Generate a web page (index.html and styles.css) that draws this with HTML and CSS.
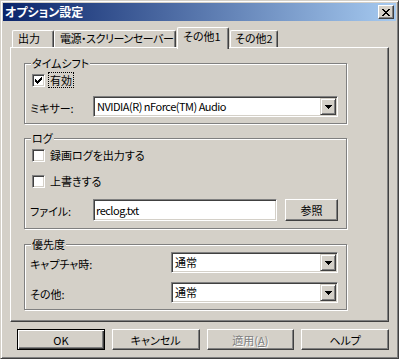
FILE: index.html
```html
<!DOCTYPE html>
<html lang="ja">
<head>
<meta charset="utf-8">
<title>オプション設定</title>
<link rel="stylesheet" href="styles.css">
</head>
<body>
<div class="window">
  <div class="titlebar">
    <span class="title">オプション設定</span>
    <span class="close">
      <svg width="8" height="7" viewBox="0 0 8 7" shape-rendering="crispEdges"><path fill="#000" d="M0 0h2v1h-2zM6 0h2v1h-2zM1 1h2v1h-2zM5 1h2v1h-2zM2 2h4v1h-4zM3 3h2v1h-2zM2 4h4v1h-4zM1 5h2v1h-2zM5 5h2v1h-2zM0 6h2v1h-2zM6 6h2v1h-2z"/></svg>
    </span>
  </div>
  <div class="client">
    <div class="tabs">
      <div class="tab t1">出力</div>
      <div class="tab t2">電源・スクリーンセーバー</div>
      <div class="tab t3 active">その他1</div>
      <div class="tab t4">その他2</div>
    </div>
    <div class="panel">
      <div class="group g1">
        <span class="legend">タイムシフト</span>
        <div class="check-row">
          <span class="checkbox"><svg width="7" height="7" viewBox="0 0 7 7" shape-rendering="crispEdges"><path fill="#000" d="M6 0h1v1h-1zM5 1h2v1h-2zM0 2h1v1h-1zM4 2h3v1h-3zM0 3h2v1h-2zM3 3h3v1h-3zM0 4h5v1h-5zM1 5h3v1h-3zM2 6h1v1h-1z"/></svg></span>
          <span class="check-label focus">有効</span>
        </div>
        <div class="field-row mixer">
          <span class="field-label short">ミキサー:</span>
          <div class="combo combo-wide">
            <span class="combo-text latin">NVIDIA(R) nForce(TM) Audio</span>
            <span class="drop"><svg width="7" height="4" viewBox="0 0 7 4" shape-rendering="crispEdges"><path fill="#000" d="M0 0h7v1h-7zM1 1h5v1h-5zM2 2h3v1h-3zM3 3h1v1h-1z"/></svg></span>
          </div>
        </div>
      </div>

      <div class="group g2">
        <span class="legend">ログ</span>
        <div class="check-row">
          <span class="checkbox"></span>
          <span class="check-label">録画ログを出力する</span>
        </div>
        <div class="check-row gap10">
          <span class="checkbox"></span>
          <span class="check-label">上書きする</span>
        </div>
        <div class="field-row file-row">
          <span class="field-label short">ファイル:</span>
          <div class="textbox latin">reclog.txt</div>
          <div class="btn browse">参照</div>
        </div>
      </div>

      <div class="group g3">
        <span class="legend">優先度</span>
        <div class="field-row">
          <span class="field-label long">キャプチャ時:</span>
          <div class="combo combo-narrow">
            <span class="combo-text">通常</span>
            <span class="drop"><svg width="7" height="4" viewBox="0 0 7 4" shape-rendering="crispEdges"><path fill="#000" d="M0 0h7v1h-7zM1 1h5v1h-5zM2 2h3v1h-3zM3 3h1v1h-1z"/></svg></span>
          </div>
        </div>
        <div class="field-row gap9">
          <span class="field-label long">その他:</span>
          <div class="combo combo-narrow">
            <span class="combo-text">通常</span>
            <span class="drop"><svg width="7" height="4" viewBox="0 0 7 4" shape-rendering="crispEdges"><path fill="#000" d="M0 0h7v1h-7zM1 1h5v1h-5zM2 2h3v1h-3zM3 3h1v1h-1z"/></svg></span>
          </div>
        </div>
      </div>
    </div>
    <div class="buttons">
      <div class="btn default">OK</div>
      <div class="btn">キャンセル</div>
      <div class="btn disabled">適用(<u>A</u>)</div>
      <div class="btn">ヘルプ</div>
    </div>
  </div>
</div>
</body>
</html>
```

FILE: styles.css
```css
* { box-sizing: border-box; }

body {
  margin: 0;
  background: #D4D0C8;
  font-family: "Noto Sans CJK JP", "Noto Sans", sans-serif;
  font-size: 11px;
  font-feature-settings: "palt";
  color: #000;
}

.window {
  width: 399px;
  height: 359px;
  background: #D4D0C8;
  border: 1px solid;
  border-color: #D4D0C8 #404040 #404040 #D4D0C8;
  box-shadow: inset 1px 1px #fff, inset -1px -1px #808080;
  padding: 2px;
  display: flex;
  flex-direction: column;
}

.titlebar {
  height: 18px;
  display: flex;
  align-items: center;
  padding: 0 2px 0 2px;
  background: linear-gradient(to right, #0A246A, #A6CAF0);
  color: #fff;
  font-weight: bold;
  font-size: 12px;
}

.title {
  flex: 1;
  line-height: 18px;
}

.close {
  width: 16px;
  height: 14px;
  background: #D4D0C8;
  border: 1px solid;
  border-color: #fff #404040 #404040 #fff;
  box-shadow: inset -1px -1px #808080;
  display: flex;
  align-items: center;
  justify-content: center;
  padding-right: 1px;
}

.client {
  flex: 1;
  padding: 6px 7px 0 7px;
  display: flex;
  flex-direction: column;
}

.tabs {
  display: flex;
  height: 20px;
  padding-left: 2px;
  position: relative;
  z-index: 1;
}

.tab {
  margin-top: 3px;
  height: 17px;
  border-top: 1px solid #fff;
  border-left: 1px solid #fff;
  border-right: 1px solid #404040;
  box-shadow: inset -1px 0 #808080;
  border-radius: 2px 2px 0 0;
  padding-left: 5px;
  line-height: 15px;
  white-space: nowrap;
  background: #D4D0C8;
}

.t1 { width: 42px; }
.t2 { width: 122px; letter-spacing: -0.45px; padding-left: 5px; }
.t3 { width: 52px; margin-left: 1px; }
.t4 { width: 48px; margin-left: 1px; padding-left: 4px; }

.tab.active {
  margin-top: 0;
  height: 22px;
  padding-left: 5px;
  line-height: 16px;
}

.panel {
  height: 275px;
  border: 1px solid;
  border-color: #fff #404040 #404040 #fff;
  box-shadow: inset -1px -1px #808080;
  padding: 15px 0 0 13px;
}

.group {
  position: relative;
  width: 323px;
  border: 1px solid #808080;
  box-shadow: 1px 1px #fff, inset 1px 1px #fff;
  padding-left: 7px;
}

.g1 { height: 61px; padding-top: 8px; }
.g2 { height: 91px; padding-top: 8px; margin-top: 14px; }
.g3 { height: 66px; padding-top: 7px; margin-top: 15px; }

.legend {
  position: absolute;
  left: 6px;
  top: -9px;
  padding: 0 1px;
  line-height: 16px;
  background: #D4D0C8;
  white-space: nowrap;
}

.check-row {
  display: flex;
  align-items: center;
  height: 16px;
}

.gap10 { margin-top: 10px; }
.gap9 { margin-top: 9px; }

.checkbox {
  width: 13px;
  height: 13px;
  background: #fff;
  border: 1px solid;
  border-color: #808080 #fff #fff #808080;
  box-shadow: inset 1px 1px #404040, inset -1px -1px #D4D0C8;
  display: flex;
  align-items: center;
  justify-content: center;
}

.check-label {
  margin-left: 3px;
  padding: 0 1px;
  border: 1px dotted transparent;
  line-height: 14px;
  white-space: nowrap;
}

.check-label.focus { border-color: #000; }

.field-row {
  display: flex;
  align-items: center;
}

.mixer { margin-top: 8px; }
.file-row { margin-top: 10px; }

.field-label {
  white-space: nowrap;
  margin-left: -2px;
  padding-top: 2px;
}

.field-label.short { width: 63px; }
.field-label.long { width: 141px; }

.combo {
  height: 21px;
  background: #fff;
  border: 1px solid;
  border-color: #808080 #fff #fff #808080;
  box-shadow: inset 1px 1px #404040, inset -1px -1px #D4D0C8;
  padding: 1px;
  display: flex;
}

.combo-wide { width: 245px; }
.combo-narrow { width: 167px; }

.combo-text {
  flex: 1;
  padding-left: 2px;
  line-height: 17px;
  white-space: nowrap;
  overflow: hidden;
}

.latin { letter-spacing: -0.5px; }

.drop {
  width: 16px;
  height: 17px;
  background: #D4D0C8;
  border: 1px solid;
  border-color: #D4D0C8 #404040 #404040 #D4D0C8;
  box-shadow: inset 1px 1px #fff, inset -1px -1px #808080;
  display: flex;
  align-items: center;
  justify-content: center;
  padding-top: 1px;
}

.textbox {
  width: 184px;
  height: 22px;
  background: #fff;
  border: 1px solid;
  border-color: #808080 #fff #fff #808080;
  box-shadow: inset 1px 1px #404040, inset -1px -1px #D4D0C8;
  padding: 1px 3px 0 2px;
  line-height: 18px;
}

.btn {
  width: 88px;
  height: 21px;
  border: 1px solid;
  border-color: #fff #404040 #404040 #fff;
  box-shadow: inset -1px -1px #808080;
  background: #D4D0C8;
  display: flex;
  align-items: center;
  justify-content: center;
  line-height: 16px;
  white-space: nowrap;
}

.btn.browse {
  width: 53px;
  height: 22px;
  margin-left: 8px;
}

.btn.default {
  border-color: #000;
  box-shadow: inset 1px 1px #fff, inset -1px -1px #404040, inset -2px -2px #808080;
}

.btn.disabled {
  color: #808080;
  text-shadow: 1px 1px #fff;
}

.buttons {
  display: flex;
  gap: 7px;
  margin-top: 7px;
  padding-left: 7px;
}
```
